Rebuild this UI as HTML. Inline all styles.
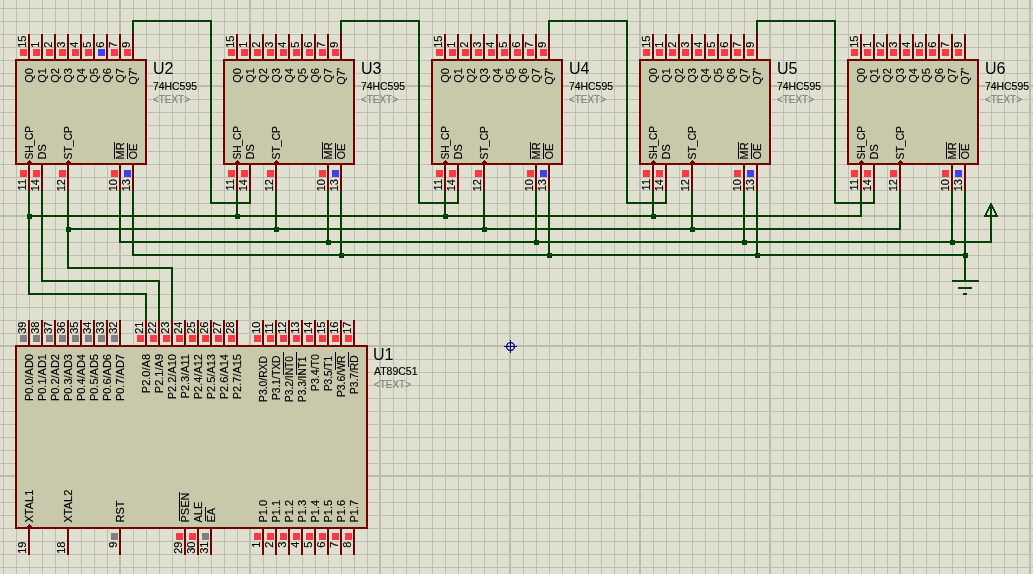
<!DOCTYPE html>
<html><head><meta charset="utf-8"><style>
html,body{margin:0;padding:0;width:1033px;height:574px;overflow:hidden;background:#e0e0d0;}
svg{display:block;will-change:transform;}
text{stroke:currentColor;stroke-width:0.15px;font-family:"Liberation Sans",sans-serif;}
</style></head><body>
<svg width="1033" height="574" viewBox="0 0 1033 574" shape-rendering="crispEdges">
<rect x="0" y="0" width="1033" height="574" fill="#e0e0d0"/>
<rect x="3" y="0" width="1" height="574" fill="#c0c0b0"/>
<rect x="16" y="0" width="1" height="574" fill="#c0c0b0"/>
<rect x="29" y="0" width="1" height="574" fill="#c0c0b0"/>
<rect x="42" y="0" width="1" height="574" fill="#c0c0b0"/>
<rect x="55" y="0" width="1" height="574" fill="#c0c0b0"/>
<rect x="68" y="0" width="1" height="574" fill="#c0c0b0"/>
<rect x="81" y="0" width="1" height="574" fill="#c0c0b0"/>
<rect x="94" y="0" width="1" height="574" fill="#c0c0b0"/>
<rect x="107" y="0" width="1" height="574" fill="#c0c0b0"/>
<rect x="119" y="0" width="2" height="574" fill="#bcbcac"/>
<rect x="133" y="0" width="1" height="574" fill="#c0c0b0"/>
<rect x="146" y="0" width="1" height="574" fill="#c0c0b0"/>
<rect x="159" y="0" width="1" height="574" fill="#c0c0b0"/>
<rect x="172" y="0" width="1" height="574" fill="#c0c0b0"/>
<rect x="185" y="0" width="1" height="574" fill="#c0c0b0"/>
<rect x="198" y="0" width="1" height="574" fill="#c0c0b0"/>
<rect x="211" y="0" width="1" height="574" fill="#c0c0b0"/>
<rect x="224" y="0" width="1" height="574" fill="#c0c0b0"/>
<rect x="237" y="0" width="1" height="574" fill="#c0c0b0"/>
<rect x="249" y="0" width="2" height="574" fill="#bcbcac"/>
<rect x="263" y="0" width="1" height="574" fill="#c0c0b0"/>
<rect x="276" y="0" width="1" height="574" fill="#c0c0b0"/>
<rect x="289" y="0" width="1" height="574" fill="#c0c0b0"/>
<rect x="302" y="0" width="1" height="574" fill="#c0c0b0"/>
<rect x="315" y="0" width="1" height="574" fill="#c0c0b0"/>
<rect x="328" y="0" width="1" height="574" fill="#c0c0b0"/>
<rect x="341" y="0" width="1" height="574" fill="#c0c0b0"/>
<rect x="354" y="0" width="1" height="574" fill="#c0c0b0"/>
<rect x="367" y="0" width="1" height="574" fill="#c0c0b0"/>
<rect x="379" y="0" width="2" height="574" fill="#bcbcac"/>
<rect x="393" y="0" width="1" height="574" fill="#c0c0b0"/>
<rect x="406" y="0" width="1" height="574" fill="#c0c0b0"/>
<rect x="419" y="0" width="1" height="574" fill="#c0c0b0"/>
<rect x="432" y="0" width="1" height="574" fill="#c0c0b0"/>
<rect x="445" y="0" width="1" height="574" fill="#c0c0b0"/>
<rect x="458" y="0" width="1" height="574" fill="#c0c0b0"/>
<rect x="471" y="0" width="1" height="574" fill="#c0c0b0"/>
<rect x="484" y="0" width="1" height="574" fill="#c0c0b0"/>
<rect x="497" y="0" width="1" height="574" fill="#c0c0b0"/>
<rect x="509" y="0" width="2" height="574" fill="#bcbcac"/>
<rect x="523" y="0" width="1" height="574" fill="#c0c0b0"/>
<rect x="536" y="0" width="1" height="574" fill="#c0c0b0"/>
<rect x="549" y="0" width="1" height="574" fill="#c0c0b0"/>
<rect x="562" y="0" width="1" height="574" fill="#c0c0b0"/>
<rect x="575" y="0" width="1" height="574" fill="#c0c0b0"/>
<rect x="588" y="0" width="1" height="574" fill="#c0c0b0"/>
<rect x="601" y="0" width="1" height="574" fill="#c0c0b0"/>
<rect x="614" y="0" width="1" height="574" fill="#c0c0b0"/>
<rect x="627" y="0" width="1" height="574" fill="#c0c0b0"/>
<rect x="639" y="0" width="2" height="574" fill="#bcbcac"/>
<rect x="653" y="0" width="1" height="574" fill="#c0c0b0"/>
<rect x="666" y="0" width="1" height="574" fill="#c0c0b0"/>
<rect x="679" y="0" width="1" height="574" fill="#c0c0b0"/>
<rect x="692" y="0" width="1" height="574" fill="#c0c0b0"/>
<rect x="705" y="0" width="1" height="574" fill="#c0c0b0"/>
<rect x="718" y="0" width="1" height="574" fill="#c0c0b0"/>
<rect x="731" y="0" width="1" height="574" fill="#c0c0b0"/>
<rect x="744" y="0" width="1" height="574" fill="#c0c0b0"/>
<rect x="757" y="0" width="1" height="574" fill="#c0c0b0"/>
<rect x="769" y="0" width="2" height="574" fill="#bcbcac"/>
<rect x="783" y="0" width="1" height="574" fill="#c0c0b0"/>
<rect x="796" y="0" width="1" height="574" fill="#c0c0b0"/>
<rect x="809" y="0" width="1" height="574" fill="#c0c0b0"/>
<rect x="822" y="0" width="1" height="574" fill="#c0c0b0"/>
<rect x="835" y="0" width="1" height="574" fill="#c0c0b0"/>
<rect x="848" y="0" width="1" height="574" fill="#c0c0b0"/>
<rect x="861" y="0" width="1" height="574" fill="#c0c0b0"/>
<rect x="874" y="0" width="1" height="574" fill="#c0c0b0"/>
<rect x="887" y="0" width="1" height="574" fill="#c0c0b0"/>
<rect x="899" y="0" width="2" height="574" fill="#bcbcac"/>
<rect x="913" y="0" width="1" height="574" fill="#c0c0b0"/>
<rect x="926" y="0" width="1" height="574" fill="#c0c0b0"/>
<rect x="939" y="0" width="1" height="574" fill="#c0c0b0"/>
<rect x="952" y="0" width="1" height="574" fill="#c0c0b0"/>
<rect x="965" y="0" width="1" height="574" fill="#c0c0b0"/>
<rect x="978" y="0" width="1" height="574" fill="#c0c0b0"/>
<rect x="991" y="0" width="1" height="574" fill="#c0c0b0"/>
<rect x="1004" y="0" width="1" height="574" fill="#c0c0b0"/>
<rect x="1017" y="0" width="1" height="574" fill="#c0c0b0"/>
<rect x="1029" y="0" width="2" height="574" fill="#bcbcac"/>
<rect x="0" y="8" width="1033" height="1" fill="#c0c0b0"/>
<rect x="0" y="21" width="1033" height="1" fill="#c0c0b0"/>
<rect x="0" y="34" width="1033" height="1" fill="#c0c0b0"/>
<rect x="0" y="47" width="1033" height="1" fill="#c0c0b0"/>
<rect x="0" y="60" width="1033" height="1" fill="#c0c0b0"/>
<rect x="0" y="73" width="1033" height="1" fill="#c0c0b0"/>
<rect x="0" y="85" width="1033" height="2" fill="#bcbcac"/>
<rect x="0" y="99" width="1033" height="1" fill="#c0c0b0"/>
<rect x="0" y="112" width="1033" height="1" fill="#c0c0b0"/>
<rect x="0" y="125" width="1033" height="1" fill="#c0c0b0"/>
<rect x="0" y="138" width="1033" height="1" fill="#c0c0b0"/>
<rect x="0" y="151" width="1033" height="1" fill="#c0c0b0"/>
<rect x="0" y="164" width="1033" height="1" fill="#c0c0b0"/>
<rect x="0" y="177" width="1033" height="1" fill="#c0c0b0"/>
<rect x="0" y="190" width="1033" height="1" fill="#c0c0b0"/>
<rect x="0" y="203" width="1033" height="1" fill="#c0c0b0"/>
<rect x="0" y="215" width="1033" height="2" fill="#bcbcac"/>
<rect x="0" y="229" width="1033" height="1" fill="#c0c0b0"/>
<rect x="0" y="242" width="1033" height="1" fill="#c0c0b0"/>
<rect x="0" y="255" width="1033" height="1" fill="#c0c0b0"/>
<rect x="0" y="268" width="1033" height="1" fill="#c0c0b0"/>
<rect x="0" y="281" width="1033" height="1" fill="#c0c0b0"/>
<rect x="0" y="294" width="1033" height="1" fill="#c0c0b0"/>
<rect x="0" y="307" width="1033" height="1" fill="#c0c0b0"/>
<rect x="0" y="320" width="1033" height="1" fill="#c0c0b0"/>
<rect x="0" y="333" width="1033" height="1" fill="#c0c0b0"/>
<rect x="0" y="345" width="1033" height="2" fill="#bcbcac"/>
<rect x="0" y="359" width="1033" height="1" fill="#c0c0b0"/>
<rect x="0" y="372" width="1033" height="1" fill="#c0c0b0"/>
<rect x="0" y="385" width="1033" height="1" fill="#c0c0b0"/>
<rect x="0" y="398" width="1033" height="1" fill="#c0c0b0"/>
<rect x="0" y="411" width="1033" height="1" fill="#c0c0b0"/>
<rect x="0" y="424" width="1033" height="1" fill="#c0c0b0"/>
<rect x="0" y="437" width="1033" height="1" fill="#c0c0b0"/>
<rect x="0" y="450" width="1033" height="1" fill="#c0c0b0"/>
<rect x="0" y="463" width="1033" height="1" fill="#c0c0b0"/>
<rect x="0" y="475" width="1033" height="2" fill="#bcbcac"/>
<rect x="0" y="489" width="1033" height="1" fill="#c0c0b0"/>
<rect x="0" y="502" width="1033" height="1" fill="#c0c0b0"/>
<rect x="0" y="515" width="1033" height="1" fill="#c0c0b0"/>
<rect x="0" y="528" width="1033" height="1" fill="#c0c0b0"/>
<rect x="0" y="541" width="1033" height="1" fill="#c0c0b0"/>
<rect x="0" y="554" width="1033" height="1" fill="#c0c0b0"/>
<rect x="0" y="567" width="1033" height="1" fill="#c0c0b0"/>
<rect x="132" y="20" width="2" height="15" fill="#004000"/>
<rect x="132" y="20" width="80" height="2" fill="#004000"/>
<rect x="210" y="20" width="2" height="184" fill="#004000"/>
<rect x="210" y="202" width="41" height="2" fill="#004000"/>
<rect x="249" y="189" width="2" height="15" fill="#004000"/>
<rect x="340" y="20" width="2" height="15" fill="#004000"/>
<rect x="340" y="20" width="80" height="2" fill="#004000"/>
<rect x="418" y="20" width="2" height="184" fill="#004000"/>
<rect x="418" y="202" width="41" height="2" fill="#004000"/>
<rect x="457" y="189" width="2" height="15" fill="#004000"/>
<rect x="548" y="20" width="2" height="15" fill="#004000"/>
<rect x="548" y="20" width="80" height="2" fill="#004000"/>
<rect x="626" y="20" width="2" height="184" fill="#004000"/>
<rect x="626" y="202" width="41" height="2" fill="#004000"/>
<rect x="665" y="189" width="2" height="15" fill="#004000"/>
<rect x="756" y="20" width="2" height="15" fill="#004000"/>
<rect x="756" y="20" width="80" height="2" fill="#004000"/>
<rect x="834" y="20" width="2" height="184" fill="#004000"/>
<rect x="834" y="202" width="41" height="2" fill="#004000"/>
<rect x="873" y="189" width="2" height="15" fill="#004000"/>
<rect x="28" y="189" width="2" height="28" fill="#004000"/>
<rect x="67" y="189" width="2" height="41" fill="#004000"/>
<rect x="119" y="189" width="2" height="54" fill="#004000"/>
<rect x="132" y="189" width="2" height="67" fill="#004000"/>
<rect x="236" y="189" width="2" height="28" fill="#004000"/>
<rect x="275" y="189" width="2" height="41" fill="#004000"/>
<rect x="327" y="189" width="2" height="54" fill="#004000"/>
<rect x="340" y="189" width="2" height="67" fill="#004000"/>
<rect x="235" y="214" width="5" height="5" fill="#004000"/>
<rect x="274" y="227" width="5" height="5" fill="#004000"/>
<rect x="326" y="240" width="5" height="5" fill="#004000"/>
<rect x="339" y="253" width="5" height="5" fill="#004000"/>
<rect x="444" y="189" width="2" height="28" fill="#004000"/>
<rect x="483" y="189" width="2" height="41" fill="#004000"/>
<rect x="535" y="189" width="2" height="54" fill="#004000"/>
<rect x="548" y="189" width="2" height="67" fill="#004000"/>
<rect x="443" y="214" width="5" height="5" fill="#004000"/>
<rect x="482" y="227" width="5" height="5" fill="#004000"/>
<rect x="534" y="240" width="5" height="5" fill="#004000"/>
<rect x="547" y="253" width="5" height="5" fill="#004000"/>
<rect x="652" y="189" width="2" height="28" fill="#004000"/>
<rect x="691" y="189" width="2" height="41" fill="#004000"/>
<rect x="743" y="189" width="2" height="54" fill="#004000"/>
<rect x="756" y="189" width="2" height="67" fill="#004000"/>
<rect x="651" y="214" width="5" height="5" fill="#004000"/>
<rect x="690" y="227" width="5" height="5" fill="#004000"/>
<rect x="742" y="240" width="5" height="5" fill="#004000"/>
<rect x="755" y="253" width="5" height="5" fill="#004000"/>
<rect x="860" y="189" width="2" height="28" fill="#004000"/>
<rect x="899" y="189" width="2" height="41" fill="#004000"/>
<rect x="951" y="189" width="2" height="54" fill="#004000"/>
<rect x="964" y="189" width="2" height="67" fill="#004000"/>
<rect x="950" y="240" width="5" height="5" fill="#004000"/>
<rect x="963" y="253" width="5" height="5" fill="#004000"/>
<rect x="28" y="215" width="834" height="2" fill="#004000"/>
<rect x="67" y="228" width="834" height="2" fill="#004000"/>
<rect x="119" y="241" width="873" height="2" fill="#004000"/>
<rect x="990" y="203" width="2" height="40" fill="#004000"/>
<rect x="132" y="254" width="834" height="2" fill="#004000"/>
<rect x="964" y="254" width="2" height="28" fill="#004000"/>
<rect x="27" y="214" width="5" height="5" fill="#004000"/>
<rect x="66" y="227" width="5" height="5" fill="#004000"/>
<rect x="28" y="215" width="2" height="80" fill="#004000"/>
<rect x="28" y="293" width="119" height="2" fill="#004000"/>
<rect x="145" y="293" width="2" height="28" fill="#004000"/>
<rect x="41" y="189" width="2" height="93" fill="#004000"/>
<rect x="41" y="280" width="119" height="2" fill="#004000"/>
<rect x="158" y="280" width="2" height="41" fill="#004000"/>
<rect x="67" y="228" width="2" height="41" fill="#004000"/>
<rect x="67" y="267" width="106" height="2" fill="#004000"/>
<rect x="171" y="267" width="2" height="54" fill="#004000"/>
<polygon points="991,204 985,216 997,216" fill="none" stroke="#004000" stroke-width="2"/>
<rect x="952" y="280" width="27" height="2" fill="#004000"/>
<rect x="958" y="287" width="14" height="2" fill="#004000"/>
<rect x="963" y="293" width="4" height="2" fill="#004000"/>
<rect x="15" y="59" width="132" height="106" fill="#700000"/>
<rect x="17" y="61" width="128" height="102" fill="#c8c8ab"/>
<rect x="28" y="34" width="2" height="26" fill="#700000"/>
<rect x="20" y="49" width="7" height="7" fill="#ff3a44"/>
<text transform="translate(26,47.8) rotate(-90)" font-size="11" text-anchor="start" fill="#000000" color="#000000" >15</text>
<text transform="translate(33,68) rotate(-90)" font-size="11" text-anchor="end" fill="#000000" color="#000000" >Q0</text>
<rect x="41" y="34" width="2" height="26" fill="#700000"/>
<rect x="33" y="49" width="7" height="7" fill="#ff3a44"/>
<text transform="translate(39,47.8) rotate(-90)" font-size="11" text-anchor="start" fill="#000000" color="#000000" >1</text>
<text transform="translate(46,68) rotate(-90)" font-size="11" text-anchor="end" fill="#000000" color="#000000" >Q1</text>
<rect x="54" y="34" width="2" height="26" fill="#700000"/>
<rect x="46" y="49" width="7" height="7" fill="#ff3a44"/>
<text transform="translate(52,47.8) rotate(-90)" font-size="11" text-anchor="start" fill="#000000" color="#000000" >2</text>
<text transform="translate(59,68) rotate(-90)" font-size="11" text-anchor="end" fill="#000000" color="#000000" >Q2</text>
<rect x="67" y="34" width="2" height="26" fill="#700000"/>
<rect x="59" y="49" width="7" height="7" fill="#ff3a44"/>
<text transform="translate(65,47.8) rotate(-90)" font-size="11" text-anchor="start" fill="#000000" color="#000000" >3</text>
<text transform="translate(72,68) rotate(-90)" font-size="11" text-anchor="end" fill="#000000" color="#000000" >Q3</text>
<rect x="80" y="34" width="2" height="26" fill="#700000"/>
<rect x="72" y="49" width="7" height="7" fill="#ff3a44"/>
<text transform="translate(78,47.8) rotate(-90)" font-size="11" text-anchor="start" fill="#000000" color="#000000" >4</text>
<text transform="translate(85,68) rotate(-90)" font-size="11" text-anchor="end" fill="#000000" color="#000000" >Q4</text>
<rect x="93" y="34" width="2" height="26" fill="#700000"/>
<rect x="85" y="49" width="7" height="7" fill="#ff3a44"/>
<text transform="translate(91,47.8) rotate(-90)" font-size="11" text-anchor="start" fill="#000000" color="#000000" >5</text>
<text transform="translate(98,68) rotate(-90)" font-size="11" text-anchor="end" fill="#000000" color="#000000" >Q5</text>
<rect x="106" y="34" width="2" height="26" fill="#700000"/>
<rect x="98" y="49" width="7" height="7" fill="#4040f0"/>
<text transform="translate(104,47.8) rotate(-90)" font-size="11" text-anchor="start" fill="#000000" color="#000000" >6</text>
<text transform="translate(111,68) rotate(-90)" font-size="11" text-anchor="end" fill="#000000" color="#000000" >Q6</text>
<rect x="119" y="34" width="2" height="26" fill="#700000"/>
<rect x="111" y="49" width="7" height="7" fill="#ff3a44"/>
<text transform="translate(117,47.8) rotate(-90)" font-size="11" text-anchor="start" fill="#000000" color="#000000" >7</text>
<text transform="translate(124,68) rotate(-90)" font-size="11" text-anchor="end" fill="#000000" color="#000000" >Q7</text>
<rect x="132" y="34" width="2" height="26" fill="#700000"/>
<rect x="124" y="49" width="7" height="7" fill="#ff3a44"/>
<text transform="translate(130,47.8) rotate(-90)" font-size="11" text-anchor="start" fill="#000000" color="#000000" >9</text>
<text transform="translate(137,68) rotate(-90)" font-size="11" text-anchor="end" fill="#000000" color="#000000" >Q7'</text>
<rect x="28" y="165" width="2" height="26" fill="#700000"/>
<rect x="20" y="170" width="7" height="7" fill="#ff3a44"/>
<text transform="translate(26,179) rotate(-90)" font-size="11" text-anchor="end" fill="#000000" color="#000000" >11</text>
<text transform="translate(33,159.5) rotate(-90)" font-size="11" text-anchor="start" fill="#000000" color="#000000" textLength="33.5" lengthAdjust="spacingAndGlyphs">SH_CP</text>
<polygon points="26.5,163 32.5,163 29.5,159.5" fill="#700000"/>
<rect x="41" y="165" width="2" height="26" fill="#700000"/>
<rect x="33" y="170" width="7" height="7" fill="#ff3a44"/>
<text transform="translate(39,179) rotate(-90)" font-size="11" text-anchor="end" fill="#000000" color="#000000" >14</text>
<text transform="translate(46,159.5) rotate(-90)" font-size="11" text-anchor="start" fill="#000000" color="#000000" >DS</text>
<rect x="67" y="165" width="2" height="26" fill="#700000"/>
<rect x="59" y="170" width="7" height="7" fill="#ff3a44"/>
<text transform="translate(65,179) rotate(-90)" font-size="11" text-anchor="end" fill="#000000" color="#000000" >12</text>
<text transform="translate(72,159.5) rotate(-90)" font-size="11" text-anchor="start" fill="#000000" color="#000000" textLength="33.5" lengthAdjust="spacingAndGlyphs">ST_CP</text>
<polygon points="65.5,163 71.5,163 68.5,159.5" fill="#700000"/>
<rect x="119" y="165" width="2" height="26" fill="#700000"/>
<rect x="111" y="170" width="7" height="7" fill="#ff3a44"/>
<text transform="translate(117,179) rotate(-90)" font-size="11" text-anchor="end" fill="#000000" color="#000000" >10</text>
<text transform="translate(124,159.5) rotate(-90)" font-size="11" text-anchor="start" fill="#000000" color="#000000" >MR</text>
<rect x="132" y="165" width="2" height="26" fill="#700000"/>
<rect x="124" y="170" width="7" height="7" fill="#4040f0"/>
<text transform="translate(130,179) rotate(-90)" font-size="11" text-anchor="end" fill="#000000" color="#000000" >13</text>
<text transform="translate(137,159.5) rotate(-90)" font-size="11" text-anchor="start" fill="#000000" color="#000000" >OE</text>
<rect x="114" y="142" width="1" height="17" fill="#000000"/>
<rect x="127" y="143" width="1" height="16" fill="#000000"/>
<text x="153" y="74" font-size="16" text-anchor="start" fill="#000000" color="#000000" textLength="20.5" lengthAdjust="spacingAndGlyphs" style="stroke-width:0">U2</text>
<text x="153" y="90" font-size="11" text-anchor="start" fill="#000000" color="#000000" textLength="44" lengthAdjust="spacingAndGlyphs">74HC595</text>
<text x="153" y="103" font-size="11" text-anchor="start" fill="#808080" color="#808080" textLength="37" lengthAdjust="spacingAndGlyphs">&lt;TEXT&gt;</text>
<rect x="223" y="59" width="132" height="106" fill="#700000"/>
<rect x="225" y="61" width="128" height="102" fill="#c8c8ab"/>
<rect x="236" y="34" width="2" height="26" fill="#700000"/>
<rect x="228" y="49" width="7" height="7" fill="#ff3a44"/>
<text transform="translate(234,47.8) rotate(-90)" font-size="11" text-anchor="start" fill="#000000" color="#000000" >15</text>
<text transform="translate(241,68) rotate(-90)" font-size="11" text-anchor="end" fill="#000000" color="#000000" >Q0</text>
<rect x="249" y="34" width="2" height="26" fill="#700000"/>
<rect x="241" y="49" width="7" height="7" fill="#ff3a44"/>
<text transform="translate(247,47.8) rotate(-90)" font-size="11" text-anchor="start" fill="#000000" color="#000000" >1</text>
<text transform="translate(254,68) rotate(-90)" font-size="11" text-anchor="end" fill="#000000" color="#000000" >Q1</text>
<rect x="262" y="34" width="2" height="26" fill="#700000"/>
<rect x="254" y="49" width="7" height="7" fill="#ff3a44"/>
<text transform="translate(260,47.8) rotate(-90)" font-size="11" text-anchor="start" fill="#000000" color="#000000" >2</text>
<text transform="translate(267,68) rotate(-90)" font-size="11" text-anchor="end" fill="#000000" color="#000000" >Q2</text>
<rect x="275" y="34" width="2" height="26" fill="#700000"/>
<rect x="267" y="49" width="7" height="7" fill="#ff3a44"/>
<text transform="translate(273,47.8) rotate(-90)" font-size="11" text-anchor="start" fill="#000000" color="#000000" >3</text>
<text transform="translate(280,68) rotate(-90)" font-size="11" text-anchor="end" fill="#000000" color="#000000" >Q3</text>
<rect x="288" y="34" width="2" height="26" fill="#700000"/>
<rect x="280" y="49" width="7" height="7" fill="#ff3a44"/>
<text transform="translate(286,47.8) rotate(-90)" font-size="11" text-anchor="start" fill="#000000" color="#000000" >4</text>
<text transform="translate(293,68) rotate(-90)" font-size="11" text-anchor="end" fill="#000000" color="#000000" >Q4</text>
<rect x="301" y="34" width="2" height="26" fill="#700000"/>
<rect x="293" y="49" width="7" height="7" fill="#ff3a44"/>
<text transform="translate(299,47.8) rotate(-90)" font-size="11" text-anchor="start" fill="#000000" color="#000000" >5</text>
<text transform="translate(306,68) rotate(-90)" font-size="11" text-anchor="end" fill="#000000" color="#000000" >Q5</text>
<rect x="314" y="34" width="2" height="26" fill="#700000"/>
<rect x="306" y="49" width="7" height="7" fill="#ff3a44"/>
<text transform="translate(312,47.8) rotate(-90)" font-size="11" text-anchor="start" fill="#000000" color="#000000" >6</text>
<text transform="translate(319,68) rotate(-90)" font-size="11" text-anchor="end" fill="#000000" color="#000000" >Q6</text>
<rect x="327" y="34" width="2" height="26" fill="#700000"/>
<rect x="319" y="49" width="7" height="7" fill="#ff3a44"/>
<text transform="translate(325,47.8) rotate(-90)" font-size="11" text-anchor="start" fill="#000000" color="#000000" >7</text>
<text transform="translate(332,68) rotate(-90)" font-size="11" text-anchor="end" fill="#000000" color="#000000" >Q7</text>
<rect x="340" y="34" width="2" height="26" fill="#700000"/>
<rect x="332" y="49" width="7" height="7" fill="#ff3a44"/>
<text transform="translate(338,47.8) rotate(-90)" font-size="11" text-anchor="start" fill="#000000" color="#000000" >9</text>
<text transform="translate(345,68) rotate(-90)" font-size="11" text-anchor="end" fill="#000000" color="#000000" >Q7'</text>
<rect x="236" y="165" width="2" height="26" fill="#700000"/>
<rect x="228" y="170" width="7" height="7" fill="#ff3a44"/>
<text transform="translate(234,179) rotate(-90)" font-size="11" text-anchor="end" fill="#000000" color="#000000" >11</text>
<text transform="translate(241,159.5) rotate(-90)" font-size="11" text-anchor="start" fill="#000000" color="#000000" textLength="33.5" lengthAdjust="spacingAndGlyphs">SH_CP</text>
<polygon points="234.5,163 240.5,163 237.5,159.5" fill="#700000"/>
<rect x="249" y="165" width="2" height="26" fill="#700000"/>
<rect x="241" y="170" width="7" height="7" fill="#ff3a44"/>
<text transform="translate(247,179) rotate(-90)" font-size="11" text-anchor="end" fill="#000000" color="#000000" >14</text>
<text transform="translate(254,159.5) rotate(-90)" font-size="11" text-anchor="start" fill="#000000" color="#000000" >DS</text>
<rect x="275" y="165" width="2" height="26" fill="#700000"/>
<rect x="267" y="170" width="7" height="7" fill="#ff3a44"/>
<text transform="translate(273,179) rotate(-90)" font-size="11" text-anchor="end" fill="#000000" color="#000000" >12</text>
<text transform="translate(280,159.5) rotate(-90)" font-size="11" text-anchor="start" fill="#000000" color="#000000" textLength="33.5" lengthAdjust="spacingAndGlyphs">ST_CP</text>
<polygon points="273.5,163 279.5,163 276.5,159.5" fill="#700000"/>
<rect x="327" y="165" width="2" height="26" fill="#700000"/>
<rect x="319" y="170" width="7" height="7" fill="#ff3a44"/>
<text transform="translate(325,179) rotate(-90)" font-size="11" text-anchor="end" fill="#000000" color="#000000" >10</text>
<text transform="translate(332,159.5) rotate(-90)" font-size="11" text-anchor="start" fill="#000000" color="#000000" >MR</text>
<rect x="340" y="165" width="2" height="26" fill="#700000"/>
<rect x="332" y="170" width="7" height="7" fill="#4040f0"/>
<text transform="translate(338,179) rotate(-90)" font-size="11" text-anchor="end" fill="#000000" color="#000000" >13</text>
<text transform="translate(345,159.5) rotate(-90)" font-size="11" text-anchor="start" fill="#000000" color="#000000" >OE</text>
<rect x="322" y="142" width="1" height="17" fill="#000000"/>
<rect x="335" y="143" width="1" height="16" fill="#000000"/>
<text x="361" y="74" font-size="16" text-anchor="start" fill="#000000" color="#000000" textLength="20.5" lengthAdjust="spacingAndGlyphs" style="stroke-width:0">U3</text>
<text x="361" y="90" font-size="11" text-anchor="start" fill="#000000" color="#000000" textLength="44" lengthAdjust="spacingAndGlyphs">74HC595</text>
<text x="361" y="103" font-size="11" text-anchor="start" fill="#808080" color="#808080" textLength="37" lengthAdjust="spacingAndGlyphs">&lt;TEXT&gt;</text>
<rect x="431" y="59" width="132" height="106" fill="#700000"/>
<rect x="433" y="61" width="128" height="102" fill="#c8c8ab"/>
<rect x="444" y="34" width="2" height="26" fill="#700000"/>
<rect x="436" y="49" width="7" height="7" fill="#ff3a44"/>
<text transform="translate(442,47.8) rotate(-90)" font-size="11" text-anchor="start" fill="#000000" color="#000000" >15</text>
<text transform="translate(449,68) rotate(-90)" font-size="11" text-anchor="end" fill="#000000" color="#000000" >Q0</text>
<rect x="457" y="34" width="2" height="26" fill="#700000"/>
<rect x="449" y="49" width="7" height="7" fill="#ff3a44"/>
<text transform="translate(455,47.8) rotate(-90)" font-size="11" text-anchor="start" fill="#000000" color="#000000" >1</text>
<text transform="translate(462,68) rotate(-90)" font-size="11" text-anchor="end" fill="#000000" color="#000000" >Q1</text>
<rect x="470" y="34" width="2" height="26" fill="#700000"/>
<rect x="462" y="49" width="7" height="7" fill="#ff3a44"/>
<text transform="translate(468,47.8) rotate(-90)" font-size="11" text-anchor="start" fill="#000000" color="#000000" >2</text>
<text transform="translate(475,68) rotate(-90)" font-size="11" text-anchor="end" fill="#000000" color="#000000" >Q2</text>
<rect x="483" y="34" width="2" height="26" fill="#700000"/>
<rect x="475" y="49" width="7" height="7" fill="#ff3a44"/>
<text transform="translate(481,47.8) rotate(-90)" font-size="11" text-anchor="start" fill="#000000" color="#000000" >3</text>
<text transform="translate(488,68) rotate(-90)" font-size="11" text-anchor="end" fill="#000000" color="#000000" >Q3</text>
<rect x="496" y="34" width="2" height="26" fill="#700000"/>
<rect x="488" y="49" width="7" height="7" fill="#ff3a44"/>
<text transform="translate(494,47.8) rotate(-90)" font-size="11" text-anchor="start" fill="#000000" color="#000000" >4</text>
<text transform="translate(501,68) rotate(-90)" font-size="11" text-anchor="end" fill="#000000" color="#000000" >Q4</text>
<rect x="509" y="34" width="2" height="26" fill="#700000"/>
<rect x="501" y="49" width="7" height="7" fill="#ff3a44"/>
<text transform="translate(507,47.8) rotate(-90)" font-size="11" text-anchor="start" fill="#000000" color="#000000" >5</text>
<text transform="translate(514,68) rotate(-90)" font-size="11" text-anchor="end" fill="#000000" color="#000000" >Q5</text>
<rect x="522" y="34" width="2" height="26" fill="#700000"/>
<rect x="514" y="49" width="7" height="7" fill="#ff3a44"/>
<text transform="translate(520,47.8) rotate(-90)" font-size="11" text-anchor="start" fill="#000000" color="#000000" >6</text>
<text transform="translate(527,68) rotate(-90)" font-size="11" text-anchor="end" fill="#000000" color="#000000" >Q6</text>
<rect x="535" y="34" width="2" height="26" fill="#700000"/>
<rect x="527" y="49" width="7" height="7" fill="#ff3a44"/>
<text transform="translate(533,47.8) rotate(-90)" font-size="11" text-anchor="start" fill="#000000" color="#000000" >7</text>
<text transform="translate(540,68) rotate(-90)" font-size="11" text-anchor="end" fill="#000000" color="#000000" >Q7</text>
<rect x="548" y="34" width="2" height="26" fill="#700000"/>
<rect x="540" y="49" width="7" height="7" fill="#ff3a44"/>
<text transform="translate(546,47.8) rotate(-90)" font-size="11" text-anchor="start" fill="#000000" color="#000000" >9</text>
<text transform="translate(553,68) rotate(-90)" font-size="11" text-anchor="end" fill="#000000" color="#000000" >Q7'</text>
<rect x="444" y="165" width="2" height="26" fill="#700000"/>
<rect x="436" y="170" width="7" height="7" fill="#ff3a44"/>
<text transform="translate(442,179) rotate(-90)" font-size="11" text-anchor="end" fill="#000000" color="#000000" >11</text>
<text transform="translate(449,159.5) rotate(-90)" font-size="11" text-anchor="start" fill="#000000" color="#000000" textLength="33.5" lengthAdjust="spacingAndGlyphs">SH_CP</text>
<polygon points="442.5,163 448.5,163 445.5,159.5" fill="#700000"/>
<rect x="457" y="165" width="2" height="26" fill="#700000"/>
<rect x="449" y="170" width="7" height="7" fill="#ff3a44"/>
<text transform="translate(455,179) rotate(-90)" font-size="11" text-anchor="end" fill="#000000" color="#000000" >14</text>
<text transform="translate(462,159.5) rotate(-90)" font-size="11" text-anchor="start" fill="#000000" color="#000000" >DS</text>
<rect x="483" y="165" width="2" height="26" fill="#700000"/>
<rect x="475" y="170" width="7" height="7" fill="#ff3a44"/>
<text transform="translate(481,179) rotate(-90)" font-size="11" text-anchor="end" fill="#000000" color="#000000" >12</text>
<text transform="translate(488,159.5) rotate(-90)" font-size="11" text-anchor="start" fill="#000000" color="#000000" textLength="33.5" lengthAdjust="spacingAndGlyphs">ST_CP</text>
<polygon points="481.5,163 487.5,163 484.5,159.5" fill="#700000"/>
<rect x="535" y="165" width="2" height="26" fill="#700000"/>
<rect x="527" y="170" width="7" height="7" fill="#ff3a44"/>
<text transform="translate(533,179) rotate(-90)" font-size="11" text-anchor="end" fill="#000000" color="#000000" >10</text>
<text transform="translate(540,159.5) rotate(-90)" font-size="11" text-anchor="start" fill="#000000" color="#000000" >MR</text>
<rect x="548" y="165" width="2" height="26" fill="#700000"/>
<rect x="540" y="170" width="7" height="7" fill="#4040f0"/>
<text transform="translate(546,179) rotate(-90)" font-size="11" text-anchor="end" fill="#000000" color="#000000" >13</text>
<text transform="translate(553,159.5) rotate(-90)" font-size="11" text-anchor="start" fill="#000000" color="#000000" >OE</text>
<rect x="530" y="142" width="1" height="17" fill="#000000"/>
<rect x="543" y="143" width="1" height="16" fill="#000000"/>
<text x="569" y="74" font-size="16" text-anchor="start" fill="#000000" color="#000000" textLength="20.5" lengthAdjust="spacingAndGlyphs" style="stroke-width:0">U4</text>
<text x="569" y="90" font-size="11" text-anchor="start" fill="#000000" color="#000000" textLength="44" lengthAdjust="spacingAndGlyphs">74HC595</text>
<text x="569" y="103" font-size="11" text-anchor="start" fill="#808080" color="#808080" textLength="37" lengthAdjust="spacingAndGlyphs">&lt;TEXT&gt;</text>
<rect x="639" y="59" width="132" height="106" fill="#700000"/>
<rect x="641" y="61" width="128" height="102" fill="#c8c8ab"/>
<rect x="652" y="34" width="2" height="26" fill="#700000"/>
<rect x="643" y="49" width="7" height="7" fill="#ff3a44"/>
<text transform="translate(650,47.8) rotate(-90)" font-size="11" text-anchor="start" fill="#000000" color="#000000" >15</text>
<text transform="translate(657,68) rotate(-90)" font-size="11" text-anchor="end" fill="#000000" color="#000000" >Q0</text>
<rect x="665" y="34" width="2" height="26" fill="#700000"/>
<rect x="656" y="49" width="7" height="7" fill="#ff3a44"/>
<text transform="translate(663,47.8) rotate(-90)" font-size="11" text-anchor="start" fill="#000000" color="#000000" >1</text>
<text transform="translate(670,68) rotate(-90)" font-size="11" text-anchor="end" fill="#000000" color="#000000" >Q1</text>
<rect x="678" y="34" width="2" height="26" fill="#700000"/>
<rect x="669" y="49" width="7" height="7" fill="#ff3a44"/>
<text transform="translate(676,47.8) rotate(-90)" font-size="11" text-anchor="start" fill="#000000" color="#000000" >2</text>
<text transform="translate(683,68) rotate(-90)" font-size="11" text-anchor="end" fill="#000000" color="#000000" >Q2</text>
<rect x="691" y="34" width="2" height="26" fill="#700000"/>
<rect x="682" y="49" width="7" height="7" fill="#ff3a44"/>
<text transform="translate(689,47.8) rotate(-90)" font-size="11" text-anchor="start" fill="#000000" color="#000000" >3</text>
<text transform="translate(696,68) rotate(-90)" font-size="11" text-anchor="end" fill="#000000" color="#000000" >Q3</text>
<rect x="704" y="34" width="2" height="26" fill="#700000"/>
<rect x="695" y="49" width="7" height="7" fill="#ff3a44"/>
<text transform="translate(702,47.8) rotate(-90)" font-size="11" text-anchor="start" fill="#000000" color="#000000" >4</text>
<text transform="translate(709,68) rotate(-90)" font-size="11" text-anchor="end" fill="#000000" color="#000000" >Q4</text>
<rect x="717" y="34" width="2" height="26" fill="#700000"/>
<rect x="708" y="49" width="7" height="7" fill="#ff3a44"/>
<text transform="translate(715,47.8) rotate(-90)" font-size="11" text-anchor="start" fill="#000000" color="#000000" >5</text>
<text transform="translate(722,68) rotate(-90)" font-size="11" text-anchor="end" fill="#000000" color="#000000" >Q5</text>
<rect x="730" y="34" width="2" height="26" fill="#700000"/>
<rect x="721" y="49" width="7" height="7" fill="#ff3a44"/>
<text transform="translate(728,47.8) rotate(-90)" font-size="11" text-anchor="start" fill="#000000" color="#000000" >6</text>
<text transform="translate(735,68) rotate(-90)" font-size="11" text-anchor="end" fill="#000000" color="#000000" >Q6</text>
<rect x="743" y="34" width="2" height="26" fill="#700000"/>
<rect x="734" y="49" width="7" height="7" fill="#ff3a44"/>
<text transform="translate(741,47.8) rotate(-90)" font-size="11" text-anchor="start" fill="#000000" color="#000000" >7</text>
<text transform="translate(748,68) rotate(-90)" font-size="11" text-anchor="end" fill="#000000" color="#000000" >Q7</text>
<rect x="756" y="34" width="2" height="26" fill="#700000"/>
<rect x="747" y="49" width="7" height="7" fill="#ff3a44"/>
<text transform="translate(754,47.8) rotate(-90)" font-size="11" text-anchor="start" fill="#000000" color="#000000" >9</text>
<text transform="translate(761,68) rotate(-90)" font-size="11" text-anchor="end" fill="#000000" color="#000000" >Q7'</text>
<rect x="652" y="165" width="2" height="26" fill="#700000"/>
<rect x="643" y="170" width="7" height="7" fill="#ff3a44"/>
<text transform="translate(650,179) rotate(-90)" font-size="11" text-anchor="end" fill="#000000" color="#000000" >11</text>
<text transform="translate(657,159.5) rotate(-90)" font-size="11" text-anchor="start" fill="#000000" color="#000000" textLength="33.5" lengthAdjust="spacingAndGlyphs">SH_CP</text>
<polygon points="650.5,163 656.5,163 653.5,159.5" fill="#700000"/>
<rect x="665" y="165" width="2" height="26" fill="#700000"/>
<rect x="656" y="170" width="7" height="7" fill="#ff3a44"/>
<text transform="translate(663,179) rotate(-90)" font-size="11" text-anchor="end" fill="#000000" color="#000000" >14</text>
<text transform="translate(670,159.5) rotate(-90)" font-size="11" text-anchor="start" fill="#000000" color="#000000" >DS</text>
<rect x="691" y="165" width="2" height="26" fill="#700000"/>
<rect x="682" y="170" width="7" height="7" fill="#ff3a44"/>
<text transform="translate(689,179) rotate(-90)" font-size="11" text-anchor="end" fill="#000000" color="#000000" >12</text>
<text transform="translate(696,159.5) rotate(-90)" font-size="11" text-anchor="start" fill="#000000" color="#000000" textLength="33.5" lengthAdjust="spacingAndGlyphs">ST_CP</text>
<polygon points="689.5,163 695.5,163 692.5,159.5" fill="#700000"/>
<rect x="743" y="165" width="2" height="26" fill="#700000"/>
<rect x="734" y="170" width="7" height="7" fill="#ff3a44"/>
<text transform="translate(741,179) rotate(-90)" font-size="11" text-anchor="end" fill="#000000" color="#000000" >10</text>
<text transform="translate(748,159.5) rotate(-90)" font-size="11" text-anchor="start" fill="#000000" color="#000000" >MR</text>
<rect x="756" y="165" width="2" height="26" fill="#700000"/>
<rect x="747" y="170" width="7" height="7" fill="#4040f0"/>
<text transform="translate(754,179) rotate(-90)" font-size="11" text-anchor="end" fill="#000000" color="#000000" >13</text>
<text transform="translate(761,159.5) rotate(-90)" font-size="11" text-anchor="start" fill="#000000" color="#000000" >OE</text>
<rect x="738" y="142" width="1" height="17" fill="#000000"/>
<rect x="751" y="143" width="1" height="16" fill="#000000"/>
<text x="777" y="74" font-size="16" text-anchor="start" fill="#000000" color="#000000" textLength="20.5" lengthAdjust="spacingAndGlyphs" style="stroke-width:0">U5</text>
<text x="777" y="90" font-size="11" text-anchor="start" fill="#000000" color="#000000" textLength="44" lengthAdjust="spacingAndGlyphs">74HC595</text>
<text x="777" y="103" font-size="11" text-anchor="start" fill="#808080" color="#808080" textLength="37" lengthAdjust="spacingAndGlyphs">&lt;TEXT&gt;</text>
<rect x="847" y="59" width="132" height="106" fill="#700000"/>
<rect x="849" y="61" width="128" height="102" fill="#c8c8ab"/>
<rect x="860" y="34" width="2" height="26" fill="#700000"/>
<rect x="851" y="49" width="7" height="7" fill="#ff3a44"/>
<text transform="translate(858,47.8) rotate(-90)" font-size="11" text-anchor="start" fill="#000000" color="#000000" >15</text>
<text transform="translate(865,68) rotate(-90)" font-size="11" text-anchor="end" fill="#000000" color="#000000" >Q0</text>
<rect x="873" y="34" width="2" height="26" fill="#700000"/>
<rect x="864" y="49" width="7" height="7" fill="#ff3a44"/>
<text transform="translate(871,47.8) rotate(-90)" font-size="11" text-anchor="start" fill="#000000" color="#000000" >1</text>
<text transform="translate(878,68) rotate(-90)" font-size="11" text-anchor="end" fill="#000000" color="#000000" >Q1</text>
<rect x="886" y="34" width="2" height="26" fill="#700000"/>
<rect x="877" y="49" width="7" height="7" fill="#ff3a44"/>
<text transform="translate(884,47.8) rotate(-90)" font-size="11" text-anchor="start" fill="#000000" color="#000000" >2</text>
<text transform="translate(891,68) rotate(-90)" font-size="11" text-anchor="end" fill="#000000" color="#000000" >Q2</text>
<rect x="899" y="34" width="2" height="26" fill="#700000"/>
<rect x="890" y="49" width="7" height="7" fill="#ff3a44"/>
<text transform="translate(897,47.8) rotate(-90)" font-size="11" text-anchor="start" fill="#000000" color="#000000" >3</text>
<text transform="translate(904,68) rotate(-90)" font-size="11" text-anchor="end" fill="#000000" color="#000000" >Q3</text>
<rect x="912" y="34" width="2" height="26" fill="#700000"/>
<rect x="903" y="49" width="7" height="7" fill="#ff3a44"/>
<text transform="translate(910,47.8) rotate(-90)" font-size="11" text-anchor="start" fill="#000000" color="#000000" >4</text>
<text transform="translate(917,68) rotate(-90)" font-size="11" text-anchor="end" fill="#000000" color="#000000" >Q4</text>
<rect x="925" y="34" width="2" height="26" fill="#700000"/>
<rect x="916" y="49" width="7" height="7" fill="#ff3a44"/>
<text transform="translate(923,47.8) rotate(-90)" font-size="11" text-anchor="start" fill="#000000" color="#000000" >5</text>
<text transform="translate(930,68) rotate(-90)" font-size="11" text-anchor="end" fill="#000000" color="#000000" >Q5</text>
<rect x="938" y="34" width="2" height="26" fill="#700000"/>
<rect x="929" y="49" width="7" height="7" fill="#ff3a44"/>
<text transform="translate(936,47.8) rotate(-90)" font-size="11" text-anchor="start" fill="#000000" color="#000000" >6</text>
<text transform="translate(943,68) rotate(-90)" font-size="11" text-anchor="end" fill="#000000" color="#000000" >Q6</text>
<rect x="951" y="34" width="2" height="26" fill="#700000"/>
<rect x="942" y="49" width="7" height="7" fill="#ff3a44"/>
<text transform="translate(949,47.8) rotate(-90)" font-size="11" text-anchor="start" fill="#000000" color="#000000" >7</text>
<text transform="translate(956,68) rotate(-90)" font-size="11" text-anchor="end" fill="#000000" color="#000000" >Q7</text>
<rect x="964" y="34" width="2" height="26" fill="#700000"/>
<rect x="955" y="49" width="7" height="7" fill="#ff3a44"/>
<text transform="translate(962,47.8) rotate(-90)" font-size="11" text-anchor="start" fill="#000000" color="#000000" >9</text>
<text transform="translate(969,68) rotate(-90)" font-size="11" text-anchor="end" fill="#000000" color="#000000" >Q7'</text>
<rect x="860" y="165" width="2" height="26" fill="#700000"/>
<rect x="851" y="170" width="7" height="7" fill="#ff3a44"/>
<text transform="translate(858,179) rotate(-90)" font-size="11" text-anchor="end" fill="#000000" color="#000000" >11</text>
<text transform="translate(865,159.5) rotate(-90)" font-size="11" text-anchor="start" fill="#000000" color="#000000" textLength="33.5" lengthAdjust="spacingAndGlyphs">SH_CP</text>
<polygon points="858.5,163 864.5,163 861.5,159.5" fill="#700000"/>
<rect x="873" y="165" width="2" height="26" fill="#700000"/>
<rect x="864" y="170" width="7" height="7" fill="#ff3a44"/>
<text transform="translate(871,179) rotate(-90)" font-size="11" text-anchor="end" fill="#000000" color="#000000" >14</text>
<text transform="translate(878,159.5) rotate(-90)" font-size="11" text-anchor="start" fill="#000000" color="#000000" >DS</text>
<rect x="899" y="165" width="2" height="26" fill="#700000"/>
<rect x="890" y="170" width="7" height="7" fill="#ff3a44"/>
<text transform="translate(897,179) rotate(-90)" font-size="11" text-anchor="end" fill="#000000" color="#000000" >12</text>
<text transform="translate(904,159.5) rotate(-90)" font-size="11" text-anchor="start" fill="#000000" color="#000000" textLength="33.5" lengthAdjust="spacingAndGlyphs">ST_CP</text>
<polygon points="897.5,163 903.5,163 900.5,159.5" fill="#700000"/>
<rect x="951" y="165" width="2" height="26" fill="#700000"/>
<rect x="942" y="170" width="7" height="7" fill="#ff3a44"/>
<text transform="translate(949,179) rotate(-90)" font-size="11" text-anchor="end" fill="#000000" color="#000000" >10</text>
<text transform="translate(956,159.5) rotate(-90)" font-size="11" text-anchor="start" fill="#000000" color="#000000" >MR</text>
<rect x="964" y="165" width="2" height="26" fill="#700000"/>
<rect x="955" y="170" width="7" height="7" fill="#4040f0"/>
<text transform="translate(962,179) rotate(-90)" font-size="11" text-anchor="end" fill="#000000" color="#000000" >13</text>
<text transform="translate(969,159.5) rotate(-90)" font-size="11" text-anchor="start" fill="#000000" color="#000000" >OE</text>
<rect x="946" y="142" width="1" height="17" fill="#000000"/>
<rect x="959" y="143" width="1" height="16" fill="#000000"/>
<text x="985" y="74" font-size="16" text-anchor="start" fill="#000000" color="#000000" textLength="20.5" lengthAdjust="spacingAndGlyphs" style="stroke-width:0">U6</text>
<text x="985" y="90" font-size="11" text-anchor="start" fill="#000000" color="#000000" textLength="44" lengthAdjust="spacingAndGlyphs">74HC595</text>
<text x="985" y="103" font-size="11" text-anchor="start" fill="#808080" color="#808080" textLength="37" lengthAdjust="spacingAndGlyphs">&lt;TEXT&gt;</text>
<rect x="15" y="345" width="353" height="184" fill="#700000"/>
<rect x="17" y="347" width="349" height="180" fill="#c8c8ab"/>
<rect x="28" y="320" width="2" height="26" fill="#700000"/>
<rect x="20" y="335" width="7" height="7" fill="#808080"/>
<text transform="translate(26,333.8) rotate(-90)" font-size="11" text-anchor="start" fill="#000000" color="#000000" >39</text>
<text transform="translate(33,354) rotate(-90)" font-size="11" text-anchor="end" fill="#000000" color="#000000" >P0.0/AD0</text>
<rect x="41" y="320" width="2" height="26" fill="#700000"/>
<rect x="33" y="335" width="7" height="7" fill="#808080"/>
<text transform="translate(39,333.8) rotate(-90)" font-size="11" text-anchor="start" fill="#000000" color="#000000" >38</text>
<text transform="translate(46,354) rotate(-90)" font-size="11" text-anchor="end" fill="#000000" color="#000000" >P0.1/AD1</text>
<rect x="54" y="320" width="2" height="26" fill="#700000"/>
<rect x="46" y="335" width="7" height="7" fill="#808080"/>
<text transform="translate(52,333.8) rotate(-90)" font-size="11" text-anchor="start" fill="#000000" color="#000000" >37</text>
<text transform="translate(59,354) rotate(-90)" font-size="11" text-anchor="end" fill="#000000" color="#000000" >P0.2/AD2</text>
<rect x="67" y="320" width="2" height="26" fill="#700000"/>
<rect x="59" y="335" width="7" height="7" fill="#808080"/>
<text transform="translate(65,333.8) rotate(-90)" font-size="11" text-anchor="start" fill="#000000" color="#000000" >36</text>
<text transform="translate(72,354) rotate(-90)" font-size="11" text-anchor="end" fill="#000000" color="#000000" >P0.3/AD3</text>
<rect x="80" y="320" width="2" height="26" fill="#700000"/>
<rect x="72" y="335" width="7" height="7" fill="#808080"/>
<text transform="translate(78,333.8) rotate(-90)" font-size="11" text-anchor="start" fill="#000000" color="#000000" >35</text>
<text transform="translate(85,354) rotate(-90)" font-size="11" text-anchor="end" fill="#000000" color="#000000" >P0.4/AD4</text>
<rect x="93" y="320" width="2" height="26" fill="#700000"/>
<rect x="85" y="335" width="7" height="7" fill="#808080"/>
<text transform="translate(91,333.8) rotate(-90)" font-size="11" text-anchor="start" fill="#000000" color="#000000" >34</text>
<text transform="translate(98,354) rotate(-90)" font-size="11" text-anchor="end" fill="#000000" color="#000000" >P0.5/AD5</text>
<rect x="106" y="320" width="2" height="26" fill="#700000"/>
<rect x="98" y="335" width="7" height="7" fill="#808080"/>
<text transform="translate(104,333.8) rotate(-90)" font-size="11" text-anchor="start" fill="#000000" color="#000000" >33</text>
<text transform="translate(111,354) rotate(-90)" font-size="11" text-anchor="end" fill="#000000" color="#000000" >P0.6/AD6</text>
<rect x="119" y="320" width="2" height="26" fill="#700000"/>
<rect x="111" y="335" width="7" height="7" fill="#808080"/>
<text transform="translate(117,333.8) rotate(-90)" font-size="11" text-anchor="start" fill="#000000" color="#000000" >32</text>
<text transform="translate(124,354) rotate(-90)" font-size="11" text-anchor="end" fill="#000000" color="#000000" >P0.7/AD7</text>
<rect x="145" y="320" width="2" height="26" fill="#700000"/>
<rect x="137" y="335" width="7" height="7" fill="#ff3a44"/>
<text transform="translate(143,333.8) rotate(-90)" font-size="11" text-anchor="start" fill="#000000" color="#000000" >21</text>
<text transform="translate(150,354) rotate(-90)" font-size="11" text-anchor="end" fill="#000000" color="#000000" >P2.0/A8</text>
<rect x="158" y="320" width="2" height="26" fill="#700000"/>
<rect x="150" y="335" width="7" height="7" fill="#ff3a44"/>
<text transform="translate(156,333.8) rotate(-90)" font-size="11" text-anchor="start" fill="#000000" color="#000000" >22</text>
<text transform="translate(163,354) rotate(-90)" font-size="11" text-anchor="end" fill="#000000" color="#000000" >P2.1/A9</text>
<rect x="171" y="320" width="2" height="26" fill="#700000"/>
<rect x="163" y="335" width="7" height="7" fill="#ff3a44"/>
<text transform="translate(169,333.8) rotate(-90)" font-size="11" text-anchor="start" fill="#000000" color="#000000" >23</text>
<text transform="translate(176,354) rotate(-90)" font-size="11" text-anchor="end" fill="#000000" color="#000000" >P2.2/A10</text>
<rect x="184" y="320" width="2" height="26" fill="#700000"/>
<rect x="176" y="335" width="7" height="7" fill="#ff3a44"/>
<text transform="translate(182,333.8) rotate(-90)" font-size="11" text-anchor="start" fill="#000000" color="#000000" >24</text>
<text transform="translate(189,354) rotate(-90)" font-size="11" text-anchor="end" fill="#000000" color="#000000" >P2.3/A11</text>
<rect x="197" y="320" width="2" height="26" fill="#700000"/>
<rect x="189" y="335" width="7" height="7" fill="#ff3a44"/>
<text transform="translate(195,333.8) rotate(-90)" font-size="11" text-anchor="start" fill="#000000" color="#000000" >25</text>
<text transform="translate(202,354) rotate(-90)" font-size="11" text-anchor="end" fill="#000000" color="#000000" >P2.4/A12</text>
<rect x="210" y="320" width="2" height="26" fill="#700000"/>
<rect x="202" y="335" width="7" height="7" fill="#ff3a44"/>
<text transform="translate(208,333.8) rotate(-90)" font-size="11" text-anchor="start" fill="#000000" color="#000000" >26</text>
<text transform="translate(215,354) rotate(-90)" font-size="11" text-anchor="end" fill="#000000" color="#000000" >P2.5/A13</text>
<rect x="223" y="320" width="2" height="26" fill="#700000"/>
<rect x="215" y="335" width="7" height="7" fill="#ff3a44"/>
<text transform="translate(221,333.8) rotate(-90)" font-size="11" text-anchor="start" fill="#000000" color="#000000" >27</text>
<text transform="translate(228,354) rotate(-90)" font-size="11" text-anchor="end" fill="#000000" color="#000000" >P2.6/A14</text>
<rect x="236" y="320" width="2" height="26" fill="#700000"/>
<rect x="228" y="335" width="7" height="7" fill="#ff3a44"/>
<text transform="translate(234,333.8) rotate(-90)" font-size="11" text-anchor="start" fill="#000000" color="#000000" >28</text>
<text transform="translate(241,354) rotate(-90)" font-size="11" text-anchor="end" fill="#000000" color="#000000" >P2.7/A15</text>
<rect x="262" y="320" width="2" height="26" fill="#700000"/>
<rect x="254" y="335" width="7" height="7" fill="#ff3a44"/>
<text transform="translate(260,333.8) rotate(-90)" font-size="11" text-anchor="start" fill="#000000" color="#000000" >10</text>
<text transform="translate(267,356) rotate(-90)" font-size="11" text-anchor="end" fill="#000000" color="#000000" textLength="46" lengthAdjust="spacingAndGlyphs">P3.0/RXD</text>
<rect x="275" y="320" width="2" height="26" fill="#700000"/>
<rect x="267" y="335" width="7" height="7" fill="#ff3a44"/>
<text transform="translate(273,333.8) rotate(-90)" font-size="11" text-anchor="start" fill="#000000" color="#000000" >11</text>
<text transform="translate(280,355.5) rotate(-90)" font-size="11" text-anchor="end" fill="#000000" color="#000000" textLength="44.6" lengthAdjust="spacingAndGlyphs">P3.1/TXD</text>
<rect x="288" y="320" width="2" height="26" fill="#700000"/>
<rect x="280" y="335" width="7" height="7" fill="#ff3a44"/>
<text transform="translate(286,333.8) rotate(-90)" font-size="11" text-anchor="start" fill="#000000" color="#000000" >12</text>
<text transform="translate(293,356) rotate(-90)" font-size="11" text-anchor="end" fill="#000000" color="#000000" textLength="46.1" lengthAdjust="spacingAndGlyphs">P3.2/INT0</text>
<rect x="301" y="320" width="2" height="26" fill="#700000"/>
<rect x="293" y="335" width="7" height="7" fill="#ff3a44"/>
<text transform="translate(299,333.8) rotate(-90)" font-size="11" text-anchor="start" fill="#000000" color="#000000" >13</text>
<text transform="translate(306,356.5) rotate(-90)" font-size="11" text-anchor="end" fill="#000000" color="#000000" textLength="45.5" lengthAdjust="spacingAndGlyphs">P3.3/INT1</text>
<rect x="314" y="320" width="2" height="26" fill="#700000"/>
<rect x="306" y="335" width="7" height="7" fill="#ff3a44"/>
<text transform="translate(312,333.8) rotate(-90)" font-size="11" text-anchor="start" fill="#000000" color="#000000" >14</text>
<text transform="translate(319,354) rotate(-90)" font-size="11" text-anchor="end" fill="#000000" color="#000000" textLength="37.2" lengthAdjust="spacingAndGlyphs">P3.4/T0</text>
<rect x="327" y="320" width="2" height="26" fill="#700000"/>
<rect x="319" y="335" width="7" height="7" fill="#ff3a44"/>
<text transform="translate(325,333.8) rotate(-90)" font-size="11" text-anchor="start" fill="#000000" color="#000000" >15</text>
<text transform="translate(332,356) rotate(-90)" font-size="11" text-anchor="end" fill="#000000" color="#000000" textLength="35.1" lengthAdjust="spacingAndGlyphs">P3.5/T1</text>
<rect x="340" y="320" width="2" height="26" fill="#700000"/>
<rect x="332" y="335" width="7" height="7" fill="#ff3a44"/>
<text transform="translate(338,333.8) rotate(-90)" font-size="11" text-anchor="start" fill="#000000" color="#000000" >16</text>
<text transform="translate(345,355.5) rotate(-90)" font-size="11" text-anchor="end" fill="#000000" color="#000000" textLength="41.6" lengthAdjust="spacingAndGlyphs">P3.6/WR</text>
<rect x="353" y="320" width="2" height="26" fill="#700000"/>
<rect x="345" y="335" width="7" height="7" fill="#ff3a44"/>
<text transform="translate(351,333.8) rotate(-90)" font-size="11" text-anchor="start" fill="#000000" color="#000000" >17</text>
<text transform="translate(358,355.5) rotate(-90)" font-size="11" text-anchor="end" fill="#000000" color="#000000" textLength="38.6" lengthAdjust="spacingAndGlyphs">P3.7/RD</text>
<rect x="28" y="529" width="2" height="26" fill="#700000"/>
<text transform="translate(26,541.5) rotate(-90)" font-size="11" text-anchor="end" fill="#000000" color="#000000" >19</text>
<text transform="translate(33,522.5) rotate(-90)" font-size="11" text-anchor="start" fill="#000000" color="#000000" >XTAL1</text>
<polygon points="26.5,527 32.5,527 29.5,523.5" fill="#700000"/>
<rect x="67" y="529" width="2" height="26" fill="#700000"/>
<text transform="translate(65,541.5) rotate(-90)" font-size="11" text-anchor="end" fill="#000000" color="#000000" >18</text>
<text transform="translate(72,522.5) rotate(-90)" font-size="11" text-anchor="start" fill="#000000" color="#000000" >XTAL2</text>
<rect x="119" y="529" width="2" height="26" fill="#700000"/>
<rect x="111" y="533" width="7" height="7" fill="#808080"/>
<text transform="translate(117,541.5) rotate(-90)" font-size="11" text-anchor="end" fill="#000000" color="#000000" >9</text>
<text transform="translate(124,522.5) rotate(-90)" font-size="11" text-anchor="start" fill="#000000" color="#000000" >RST</text>
<rect x="184" y="529" width="2" height="26" fill="#700000"/>
<rect x="176" y="533" width="7" height="7" fill="#ff3a44"/>
<text transform="translate(182,541.5) rotate(-90)" font-size="11" text-anchor="end" fill="#000000" color="#000000" >29</text>
<text transform="translate(189,522.5) rotate(-90)" font-size="11" text-anchor="start" fill="#000000" color="#000000" >PSEN</text>
<rect x="197" y="529" width="2" height="26" fill="#700000"/>
<rect x="189" y="533" width="7" height="7" fill="#ff3a44"/>
<text transform="translate(195,541.5) rotate(-90)" font-size="11" text-anchor="end" fill="#000000" color="#000000" >30</text>
<text transform="translate(202,522.5) rotate(-90)" font-size="11" text-anchor="start" fill="#000000" color="#000000" >ALE</text>
<rect x="210" y="529" width="2" height="26" fill="#700000"/>
<rect x="202" y="533" width="7" height="7" fill="#808080"/>
<text transform="translate(208,541.5) rotate(-90)" font-size="11" text-anchor="end" fill="#000000" color="#000000" >31</text>
<text transform="translate(215,522.5) rotate(-90)" font-size="11" text-anchor="start" fill="#000000" color="#000000" >EA</text>
<rect x="262" y="529" width="2" height="26" fill="#700000"/>
<rect x="254" y="533" width="7" height="7" fill="#ff3a44"/>
<text transform="translate(260,541.5) rotate(-90)" font-size="11" text-anchor="end" fill="#000000" color="#000000" >1</text>
<text transform="translate(267,522.5) rotate(-90)" font-size="11" text-anchor="start" fill="#000000" color="#000000" >P1.0</text>
<rect x="275" y="529" width="2" height="26" fill="#700000"/>
<rect x="267" y="533" width="7" height="7" fill="#ff3a44"/>
<text transform="translate(273,541.5) rotate(-90)" font-size="11" text-anchor="end" fill="#000000" color="#000000" >2</text>
<text transform="translate(280,522.5) rotate(-90)" font-size="11" text-anchor="start" fill="#000000" color="#000000" >P1.1</text>
<rect x="288" y="529" width="2" height="26" fill="#700000"/>
<rect x="280" y="533" width="7" height="7" fill="#ff3a44"/>
<text transform="translate(286,541.5) rotate(-90)" font-size="11" text-anchor="end" fill="#000000" color="#000000" >3</text>
<text transform="translate(293,522.5) rotate(-90)" font-size="11" text-anchor="start" fill="#000000" color="#000000" >P1.2</text>
<rect x="301" y="529" width="2" height="26" fill="#700000"/>
<rect x="293" y="533" width="7" height="7" fill="#ff3a44"/>
<text transform="translate(299,541.5) rotate(-90)" font-size="11" text-anchor="end" fill="#000000" color="#000000" >4</text>
<text transform="translate(306,522.5) rotate(-90)" font-size="11" text-anchor="start" fill="#000000" color="#000000" >P1.3</text>
<rect x="314" y="529" width="2" height="26" fill="#700000"/>
<rect x="306" y="533" width="7" height="7" fill="#ff3a44"/>
<text transform="translate(312,541.5) rotate(-90)" font-size="11" text-anchor="end" fill="#000000" color="#000000" >5</text>
<text transform="translate(319,522.5) rotate(-90)" font-size="11" text-anchor="start" fill="#000000" color="#000000" >P1.4</text>
<rect x="327" y="529" width="2" height="26" fill="#700000"/>
<rect x="319" y="533" width="7" height="7" fill="#ff3a44"/>
<text transform="translate(325,541.5) rotate(-90)" font-size="11" text-anchor="end" fill="#000000" color="#000000" >6</text>
<text transform="translate(332,522.5) rotate(-90)" font-size="11" text-anchor="start" fill="#000000" color="#000000" >P1.5</text>
<rect x="340" y="529" width="2" height="26" fill="#700000"/>
<rect x="332" y="533" width="7" height="7" fill="#ff3a44"/>
<text transform="translate(338,541.5) rotate(-90)" font-size="11" text-anchor="end" fill="#000000" color="#000000" >7</text>
<text transform="translate(345,522.5) rotate(-90)" font-size="11" text-anchor="start" fill="#000000" color="#000000" >P1.6</text>
<rect x="353" y="529" width="2" height="26" fill="#700000"/>
<rect x="345" y="533" width="7" height="7" fill="#ff3a44"/>
<text transform="translate(351,541.5) rotate(-90)" font-size="11" text-anchor="end" fill="#000000" color="#000000" >8</text>
<text transform="translate(358,522.5) rotate(-90)" font-size="11" text-anchor="start" fill="#000000" color="#000000" >P1.7</text>
<rect x="283" y="352" width="1" height="23" fill="#000000"/>
<rect x="296" y="352" width="1" height="23" fill="#000000"/>
<rect x="335" y="352" width="1" height="18" fill="#000000"/>
<rect x="348" y="352" width="1" height="15" fill="#000000"/>
<rect x="179" y="492" width="1" height="29" fill="#000000"/>
<rect x="205" y="507" width="1" height="14" fill="#000000"/>
<text x="373" y="360" font-size="16" text-anchor="start" fill="#000000" color="#000000" textLength="20.5" lengthAdjust="spacingAndGlyphs" style="stroke-width:0">U1</text>
<text x="374" y="375" font-size="11" text-anchor="start" fill="#000000" color="#000000" textLength="43.5" lengthAdjust="spacingAndGlyphs">AT89C51</text>
<text x="374" y="388" font-size="11" text-anchor="start" fill="#808080" color="#808080" textLength="37" lengthAdjust="spacingAndGlyphs">&lt;TEXT&gt;</text>
<circle cx="510.5" cy="346.5" r="3.9" fill="none" stroke="#000080" stroke-width="1.3" shape-rendering="geometricPrecision"/>
<rect x="510" y="340" width="1" height="13" fill="#000080"/>
<rect x="504" y="346" width="13" height="1" fill="#000080"/>
</svg></body></html>
